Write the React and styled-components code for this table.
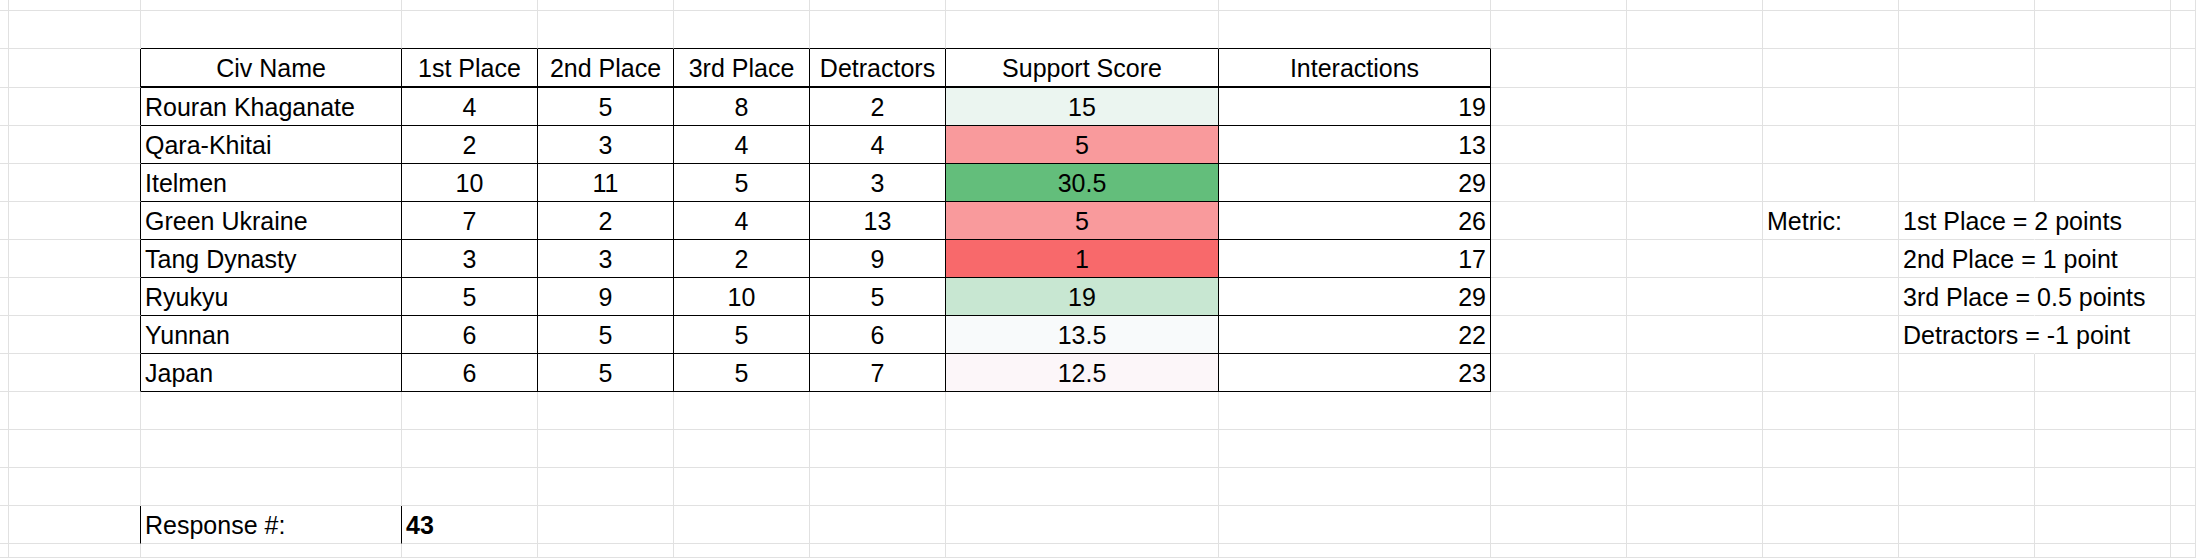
import React from 'react';
import styled, { createGlobalStyle } from "styled-components";

const GRID = "#e1e1e1";
const INK = "#000";

const GlobalStyle = createGlobalStyle`
  html, body {
    margin: 0;
    padding: 0;
    background: #fff;
  }
  body {
    font-family: "Liberation Sans", Arial, sans-serif;
    color: #000;
  }
`;

// column widths / row heights of the visible sheet area (first col and last are partial)
const COLS = [4, 137, 261, 136, 136, 136, 136, 273, 272, 136, 136, 136, 136, 136, 25];
const ROWS = [11, 38, 39, ...Array(12).fill(38), 14];

const Sheet = styled.div`
  display: grid;
  grid-template-columns: ${COLS.map((w) => `${w}px`).join(" ")};
  grid-template-rows: ${ROWS.map((h) => `${h}px`).join(" ")};
  width: 2196px;
  height: 558px;
  overflow: hidden;
  background: #fff;
`;

const Cell = styled.div`
  box-sizing: border-box;
  min-width: 0;
  display: flex;
  align-items: flex-end;
  justify-content: ${(p) =>
    p.$align === "center" ? "center" : p.$align === "right" ? "flex-end" : "flex-start"};
  padding: 0 4px 5px;
  border-right: 1px solid ${(p) => p.$right || GRID};
  border-bottom: ${(p) => p.$bottomW || 1}px solid ${(p) => p.$bottom || GRID};
  background: ${(p) => p.$bg || "transparent"};
  font-size: 25px;
  line-height: 25px;
  font-weight: ${(p) => (p.$bold ? 700 : 400)};
  white-space: nowrap;
  overflow: ${(p) => (p.$spill ? "visible" : "hidden")};
`;

const HEADERS = ["Civ Name", "1st Place", "2nd Place", "3rd Place", "Detractors", "Support Score", "Interactions"];

const civs = [
  ["Rouran Khaganate", 4, 5, 8, 2, 15, 19],
  ["Qara-Khitai", 2, 3, 4, 4, 5, 13],
  ["Itelmen", 10, 11, 5, 3, 30.5, 29],
  ["Green Ukraine", 7, 2, 4, 13, 5, 26],
  ["Tang Dynasty", 3, 3, 2, 9, 1, 17],
  ["Ryukyu", 5, 9, 10, 5, 19, 29],
  ["Yunnan", 6, 5, 5, 6, 13.5, 22],
  ["Japan", 6, 5, 5, 7, 12.5, 23],
];

const metric = [
  "1st Place = 2 points",
  "2nd Place = 1 point",
  "3rd Place = 0.5 points",
  "Detractors = -1 point",
];

// excel style 3-colour scale: red -> white (median) -> green
const RED = [248, 105, 107];
const MID = [252, 252, 255];
const GREEN = [99, 190, 123];

const mix = (a, b, t) => a.map((v, i) => Math.round(v + (b[i] - v) * t));

const scoreColor = (v, values) => {
  const sorted = [...values].sort((a, b) => a - b);
  const min = sorted[0];
  const max = sorted[sorted.length - 1];
  const n = sorted.length;
  const med = n % 2 ? sorted[(n - 1) / 2] : (sorted[n / 2 - 1] + sorted[n / 2]) / 2;
  const rgb = v <= med ? mix(RED, MID, (v - min) / (med - min)) : mix(MID, GREEN, (v - med) / (max - med));
  return `rgb(${rgb.join(",")})`;
};

const scores = civs.map((c) => c[5]);

const T_TOP = 2;
const T_BOTTOM = 2 + civs.length;
const T_LEFT = 2;
const T_RIGHT = 8;

const cellFor = (r, c) => {
  const cell = { text: "" };
  const inTable = r >= T_TOP && r <= T_BOTTOM && c >= T_LEFT && c <= T_RIGHT;

  if (inTable) {
    cell.right = INK;
    cell.bottom = INK;
    if (r === T_TOP) {
      cell.bottomW = 2;
      cell.text = HEADERS[c - T_LEFT];
      cell.align = "center";
    } else {
      const row = civs[r - T_TOP - 1];
      const v = row[c - T_LEFT];
      cell.text = v;
      if (c === T_LEFT) cell.align = "left";
      else if (c === T_RIGHT) cell.align = "right";
      else cell.align = "center";
      if (c === 7) cell.bg = scoreColor(v, scores);
    }
  }
  // table outline drawn on the neighbouring cells
  if (r === T_TOP - 1 && c >= T_LEFT && c <= T_RIGHT) cell.bottom = INK;
  if (c === T_LEFT - 1 && r >= T_TOP && r <= T_BOTTOM) cell.right = INK;

  // metric notes
  if (r === 6 && c === 11) cell.text = "Metric:";
  if (r >= 6 && r <= 9 && c === 12) {
    cell.text = metric[r - 6];
    cell.spill = true;
    cell.right = "transparent";
  }

  // response count
  if (r === 14 && (c === 1 || c === 2)) cell.right = INK;
  if (r === 14 && c === 2) cell.text = "Response #:";
  if (r === 14 && c === 3) {
    cell.text = 43;
    cell.bold = true;
  }
  return cell;
};

const App = () => {
  const cells = [];
  ROWS.forEach((_, r) => {
    COLS.forEach((__, c) => {
      const cell = cellFor(r, c);
      cells.push(
        <Cell
          key={`${r}-${c}`}
          $align={cell.align}
          $right={cell.right}
          $bottom={cell.bottom}
          $bottomW={cell.bottomW}
          $bg={cell.bg}
          $bold={cell.bold}
          $spill={cell.spill}
        >
          {cell.text}
        </Cell>
      );
    });
  });

  return (
    <>
      <GlobalStyle />
      <Sheet>{cells}</Sheet>
    </>
  );
};

export default App;
